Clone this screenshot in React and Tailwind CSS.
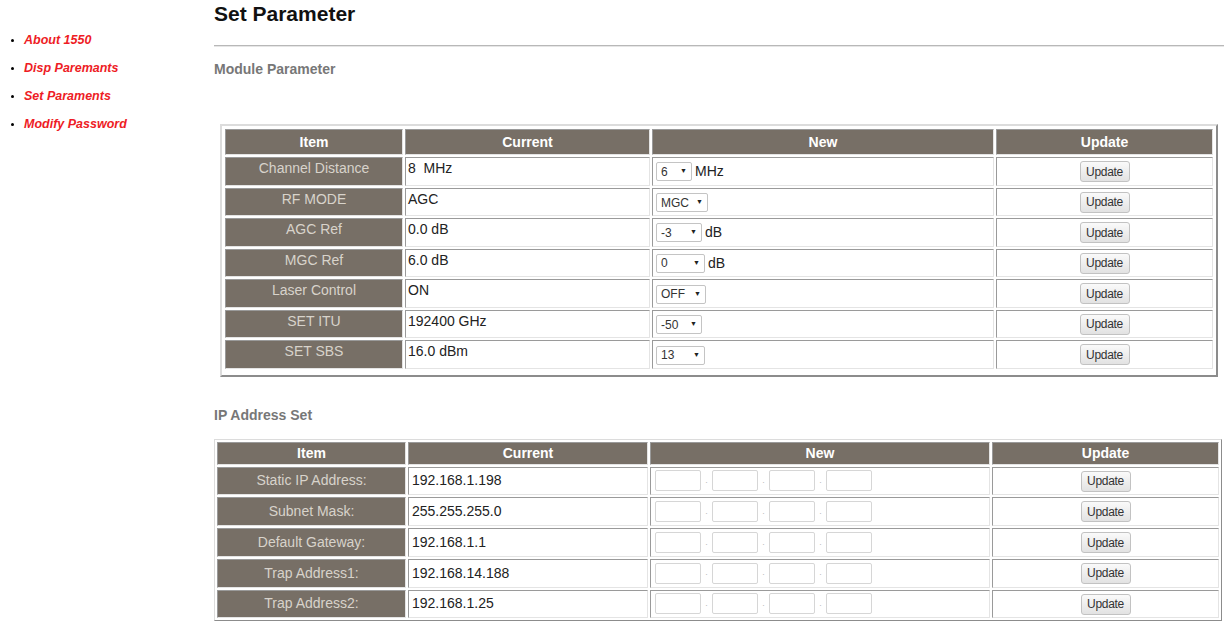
const menu = ['About 1550', 'Disp Paremants', 'Set Paraments', 'Modify Password'];

const moduleRows = [
    { item: 'Channel Distance', current: '8  MHz', value: '6', selW: 'w-[36px]', unit: 'MHz' },
    { item: 'RF MODE', current: 'AGC', value: 'MGC', selW: 'w-[52px]' },
    { item: 'AGC Ref', current: '0.0 dB', value: '-3', selW: 'w-[46px]', unit: 'dB' },
    { item: 'MGC Ref', current: '6.0 dB', value: '0', selW: 'w-[49px]', unit: 'dB' },
    { item: 'Laser Control', current: 'ON', value: 'OFF', selW: 'w-[50px]' },
    { item: 'SET ITU', current: '192400 GHz', value: '-50', selW: 'w-[46px]' },
    { item: 'SET SBS', current: '16.0 dBm', value: '13', selW: 'w-[49px]' },
];

const ipRows = [
    { item: 'Static IP Address:', current: '192.168.1.198' },
    { item: 'Subnet Mask:', current: '255.255.255.0' },
    { item: 'Default Gateway:', current: '192.168.1.1' },
    { item: 'Trap Address1:', current: '192.168.14.188' },
    { item: 'Trap Address2:', current: '192.168.1.25' },
];

// cellule en creux, comme un vieux <td border=1>
const cell = 'border border-t-[#9a9a9a] border-l-[#9a9a9a] border-r-[#e4e4e4] border-b-[#e4e4e4]';

function FakeSelect({ value, w }) {
    return (
        <span className={`inline-flex items-center justify-between h-[19px] ${w} border border-[#c4c4c4] rounded-[2px] bg-white px-[4px] text-[12px] text-[#333] align-middle`}>
            <span>{value}</span>
            <span className="text-[7px] text-[#222]">▼</span>
        </span>
    );
}

function UpdateButton() {
    return (
        <button className="h-[21px] w-[50px] border border-[#c2c2c2] rounded-[3px] bg-gradient-to-b from-[#fafafa] to-[#e2e2e2] text-[12px] text-[#333] tracking-[-0.3px]">
            Update
        </button>
    );
}

function IpBoxes() {
    return (
        <div className="flex items-center">
            {[0, 1, 2, 3].map((i) => (
                <div key={i} className="flex items-center">
                    {i > 0 && <span className="w-[11px] text-center text-[9px] text-[#bbb]">.</span>}
                    <span className="block w-[46px] h-[21px] border border-[#d6d6d6] rounded-[2px] bg-white" />
                </div>
            ))}
        </div>
    );
}

export default function App() {
    return (
        <div className="flex min-h-[640px] bg-white font-['Liberation_Sans',Arial,sans-serif] text-[14px] text-[#222]">
            {/* menu de gauche */}
            <ul className="w-[214px] shrink-0 pt-[26px]">
                {menu.map((m) => (
                    <li key={m} className="h-[28px] flex items-center">
                        <span className="ml-[11px] w-[3px] h-[3px] rounded-full bg-black" />
                        <span className="ml-[10px] text-[12.5px] font-bold italic text-[#ee1c25]">{m}</span>
                    </li>
                ))}
            </ul>

            <div className="flex-1 pr-[8px]">
                <h1 className="mt-[2px] h-[24px] leading-[24px] text-[21px] font-bold text-[#111]">Set Parameter</h1>
                <div className="mt-[19px] border-t border-[#b8b8b8] border-b border-b-[#e6e6e6]" />
                <h3 className="mt-[14px] h-[16px] leading-[16px] text-[14px] font-bold text-[#777]">Module Parameter</h3>

                {/* tableau module */}
                <table className="mt-[47px] ml-[6px] w-[998px] border-separate border-spacing-[2px] p-[1px] pb-[4px] border-2 border-t-[#dcdcdc] border-l-[#dcdcdc] border-r-[#8c8c8c] border-b-[#8c8c8c]">
                    <thead>
                        <tr>
                            <th className={`${cell} h-[26px] w-[178px] bg-[#776f66] text-white font-bold`}>Item</th>
                            <th className={`${cell} h-[26px] w-[245px] bg-[#776f66] text-white font-bold`}>Current</th>
                            <th className={`${cell} h-[26px] w-[342px] bg-[#776f66] text-white font-bold`}>New</th>
                            <th className={`${cell} h-[26px] bg-[#776f66] text-white font-bold`}>Update</th>
                        </tr>
                    </thead>
                    <tbody>
                        {moduleRows.map((r) => (
                            <tr key={r.item}>
                                <td className={`${cell} h-[28.5px] bg-[#776f66] text-[#d8d3cb] text-center align-top`}>{r.item}</td>
                                <td className={`${cell} bg-white align-top pl-[2px] whitespace-pre`}>{r.current}</td>
                                <td className={`${cell} bg-white align-middle pl-[3px]`}>
                                    <FakeSelect value={r.value} w={r.selW} />
                                    {r.unit && <span className="ml-[3px] align-middle">{r.unit}</span>}
                                </td>
                                <td className={`${cell} bg-white text-center align-middle`}>
                                    <UpdateButton />
                                </td>
                            </tr>
                        ))}
                    </tbody>
                </table>

                <h3 className="mt-[30px] h-[16px] leading-[16px] text-[14px] font-bold text-[#777]">IP Address Set</h3>

                {/* tableau IP */}
                <table className="mt-[16px] w-[1008px] border-separate border-spacing-[2px] border border-t-[#dcdcdc] border-l-[#dcdcdc] border-r-[#8c8c8c] border-b-[#8c8c8c]">
                    <thead>
                        <tr>
                            <th className={`${cell} h-[23px] w-[189px] bg-[#776f66] text-white font-bold`}>Item</th>
                            <th className={`${cell} h-[23px] w-[240px] bg-[#776f66] text-white font-bold`}>Current</th>
                            <th className={`${cell} h-[23px] w-[340px] bg-[#776f66] text-white font-bold`}>New</th>
                            <th className={`${cell} h-[23px] bg-[#776f66] text-white font-bold`}>Update</th>
                        </tr>
                    </thead>
                    <tbody>
                        {ipRows.map((r) => (
                            <tr key={r.item}>
                                <td className={`${cell} h-[28.75px] bg-[#776f66] text-[#d8d3cb] text-center`}>{r.item}</td>
                                <td className={`${cell} bg-white pl-[3px]`}>{r.current}</td>
                                <td className={`${cell} bg-white pl-[4px]`}>
                                    <IpBoxes />
                                </td>
                                <td className={`${cell} bg-white text-center`}>
                                    <UpdateButton />
                                </td>
                            </tr>
                        ))}
                    </tbody>
                </table>
            </div>
        </div>
    );
}
